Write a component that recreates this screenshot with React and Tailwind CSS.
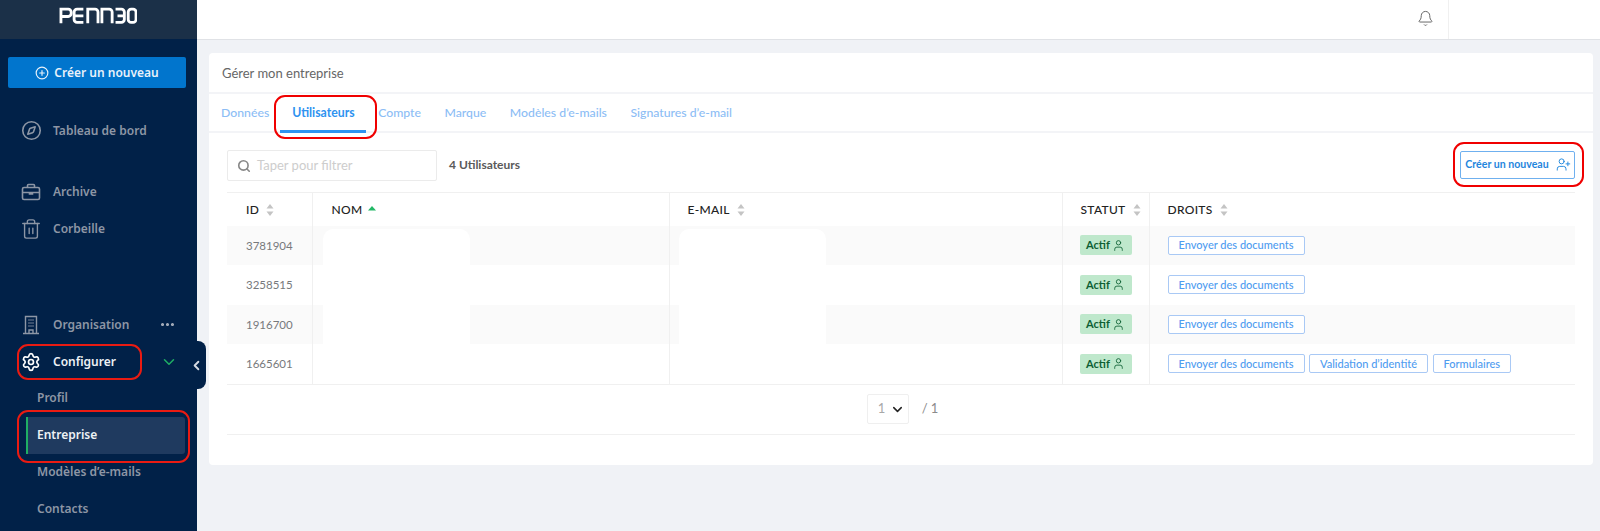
import React from "react";
import { Compass, Trash2, Settings, ChevronDown, ChevronLeft, MoreHorizontal, CirclePlus, Search, Bell, UserPlus, User } from "lucide-react";

function Logo() {
  return (
    <svg width="78" height="17" viewBox="0 0 80 17" fill="none" stroke="white" strokeWidth="2.9" className="block">
      <path d="M2 16.500V2h7.500a3 3 0 0 1 3 3v1.500a3 3 0 0 1-3 3H2" />
      <path d="M25 2h-6.500a3 3 0 0 0-3 3v7.500a3 3 0 0 0 3 3H25M15.500 8.800H25" />
      <path d="M29.500 16.500V2h7.500a3 3 0 0 1 3 3v11.500" />
      <path d="M44 16.500V2h7.500a3 3 0 0 1 3 3v11.500" />
      <path d="M58 2h6a3 3 0 0 1 3 3v7.500a3 3 0 0 1-3 3h-6M60 8.800h7" />
      <rect x="71" y="2" width="8" height="13.500" rx="3" />
    </svg>
  );
}

function Briefcase({ className }) {
  return (
    <svg viewBox="0 0 20 20" fill="none" stroke="currentColor" strokeWidth="1.6" className={className}>
      <rect x="1.500" y="5.500" width="17" height="12" rx="1.500" />
      <path d="M6.500 5.500V3.500a1 1 0 0 1 1-1h5a1 1 0 0 1 1 1v2M1.500 10.500h17M8.500 10.500v1.500h3v-1.500" />
    </svg>
  );
}

function Office({ className }) {
  return (
    <svg viewBox="0 0 20 20" fill="none" stroke="currentColor" strokeWidth="1.4" className={className}>
      <path d="M4.500 18.500V1.500h11v17M2 18.500h16M8 18.500v-3.500h4v3.500" />
      <path d="M8 5h.01M12 5h.01M8 8h.01M12 8h.01M8 11h.01M12 11h.01M10 5h.01M10 8h.01M10 11h.01" strokeWidth="1.500" strokeLinecap="round" />
    </svg>
  );
}

function SortIcon({ active }) {
  if (active) {
    return (
      <svg width="8" height="5" viewBox="0 0 8 5" className="mb-[4px] ml-[6px]">
        <path d="M4 0l4 4.500H0z" fill="#22b866" />
      </svg>
    );
  }
  return (
    <svg width="8" height="12" viewBox="0 0 8 12" className="ml-[7px]">
      <path d="M4 0l3.500 4.500h-7zM4 12L.5 7.500h7z" fill="#c4c4c4" />
    </svg>
  );
}

const navItem = "flex items-center h-[37px] pl-[21px] text-[12px] font-semibold text-[#8d96a5]";
const subItem = "flex h-[36.750px] items-center pl-[37px] text-[12px] font-semibold text-[#8d96a5]";

function Sidebar() {
  return (
    <aside className="relative w-[197px] shrink-0 bg-[#012148] font-['Noto_Sans',sans-serif]">
      <div className="flex h-[39px] items-start justify-center bg-[#1b3048] pt-[7px] pr-[1px]">
        <Logo />
      </div>
      <div className="mx-[8px] mt-[18px] flex h-[31px] w-[178px] items-center justify-center gap-[5px] rounded-[2px] bg-[#0175cd] text-[12px] font-semibold text-[#e8f1fa]">
        <CirclePlus size={14} strokeWidth={2} />
        <span>Créer un nouveau</span>
      </div>
      <div className="mt-[24px]">
        <div className={navItem}>
          <Compass size={21} strokeWidth={1.8} className="mr-[11px]" />
          Tableau de bord
        </div>
      </div>
      <div className="mt-[24px]">
        <div className={navItem}>
          <Briefcase className="mr-[12px] h-[20px] w-[20px]" />
          Archive
        </div>
        <div className={navItem}>
          <Trash2 size={22} strokeWidth={1.5} className="mr-[11px] ml-[-1px]" />
          Corbeille
        </div>
      </div>
      <div className="mt-[59px]">
        <div className={navItem}>
          <Office className="mr-[12px] h-[20px] w-[20px]" />
          <span className="flex-1">Organisation</span>
          <MoreHorizontal size={17} strokeWidth={2.4} className="mr-[21px] text-[#aab2be]" />
        </div>
        <div className={`${navItem} relative h-[36px] text-white`}>
          <Settings size={20} strokeWidth={2} className="mr-[12px] text-white" />
          <span className="flex-1 text-[#eef1f5]">Configurer</span>
          <ChevronDown size={18} strokeWidth={2} className="mr-[19px] text-[#1fae64]" />
          <div className="absolute left-[17px] top-[1px] h-[36px] w-[125px] rounded-[11px] border-2 border-[#ea1b12]" />
        </div>
        <div className={subItem}>Profil</div>
        <div className="relative">
          <div className="ml-[26px] flex h-[37px] w-[159px] items-center rounded-r-[3px] border-l-2 border-[#1fae64] bg-[#1f3a5f] pl-[9px] text-[12px] font-semibold text-[#eef1f5]">
            Entreprise
          </div>
          <div className="absolute left-[17px] top-[-7px] h-[53px] w-[173px] rounded-[11px] border-2 border-[#ea1b12]" />
        </div>
        <div className={subItem}>Modèles d’e-mails</div>
        <div className={subItem}>Contacts</div>
      </div>
      <div className="absolute left-[186px] top-[341px] flex h-[48px] w-[20px] items-center justify-center rounded-r-[8px] bg-[#012148]">
        <ChevronLeft size={15} strokeWidth={3} className="ml-[1px] text-[#d5dae2]" />
      </div>
    </aside>
  );
}

function Tag({ children }) {
  return (
    <span className="flex h-[19px] items-center rounded-[2px] border border-[#a9c9f5] bg-white px-[10px] text-[11px] font-medium text-[#4f9cf0]">
      {children}
    </span>
  );
}

const rows = [
  { id: "3781904", rights: ["Envoyer des documents"] },
  { id: "3258515", rights: ["Envoyer des documents"] },
  { id: "1916700", rights: ["Envoyer des documents"] },
  { id: "1665601", rights: ["Envoyer des documents", "Validation d’identité", "Formulaires"] },
];

function Table() {
  const th = "h-[33px] border-r border-[#f0f0f0] pt-[2px] text-left align-middle text-[12px] font-medium tracking-[0.3px] text-[#222]";
  const td = "h-[39.500px] border-r border-[#f0f0f0] align-middle";
  return (
    <div className="relative mx-[18px] font-['Lato',sans-serif]">
      <table className="w-[1348px] table-fixed border-collapse">
        <colgroup>
          <col className="w-[85px]" />
          <col className="w-[357px]" />
          <col className="w-[393px]" />
          <col className="w-[87px]" />
          <col />
        </colgroup>
        <thead>
          <tr className="border-t border-[#f0f0f0]">
            <th className={`${th} pl-[19px]`}><span className="flex items-center">ID<SortIcon /></span></th>
            <th className={`${th} pl-[19px]`}><span className="flex items-center">NOM<SortIcon active /></span></th>
            <th className={`${th} pl-[18px]`}><span className="flex items-center">E-MAIL<SortIcon /></span></th>
            <th className={`${th} pl-[18px]`}><span className="flex items-center">STATUT<SortIcon /></span></th>
            <th className={`${th} border-r-0 pl-[18px]`}><span className="flex items-center">DROITS<SortIcon /></span></th>
          </tr>
        </thead>
        <tbody>
          {rows.map((r, i) => (
            <tr key={r.id} className={i % 2 === 0 ? "bg-[#fafafa]" : "bg-white"}>
              <td className={`${td} pl-[19px] text-[11.500px] text-[#77797c]`}>{r.id}</td>
              <td className={td}></td>
              <td className={td}></td>
              <td className={`${td} pl-[17px]`}>
                <span className="flex h-[20px] w-[52px] items-center justify-center gap-[2px] rounded-[2px] bg-[#bfe8cc] text-[11px] font-bold text-[#0d5f33]">
                  Actif
                  <User size={13} strokeWidth={1.6} />
                </span>
              </td>
              <td className={`${td} border-r-0 pl-[18px]`}>
                <div className="flex gap-[4.500px]">
                  {r.rights.map((t) => (
                    <Tag key={t}>{t}</Tag>
                  ))}
                </div>
              </td>
            </tr>
          ))}
        </tbody>
      </table>
      <div className="flex h-[51px] items-center justify-center border-y border-[#f0f0f0] pl-[3px]">
        <div className="flex h-[30px] w-[42px] items-center justify-between rounded-[2px] border border-[#efefef] pl-[10px] pr-[3px] text-[13px] text-[#a8a8a8]">
          1
          <ChevronDown size={15} strokeWidth={2.4} className="text-[#222]" />
        </div>
        <span className="ml-[13px] text-[13px] text-[#8b8b8b]">/ 1</span>
      </div>
      <div className="pointer-events-none absolute left-[96px] top-[37px] h-[115px] w-[147px] rounded-t-[10px] bg-white" />
      <div className="pointer-events-none absolute left-[452px] top-[37px] h-[115px] w-[147px] rounded-t-[10px] bg-white" />
    </div>
  );
}

function Card() {
  const tab = "text-[12.250px] font-medium text-[#8cbdf5]";
  return (
    <div className="h-[412px] w-[1384px] rounded-[4px] bg-white font-['Lato',sans-serif]">
      <div className="flex h-[41px] items-center border-b-2 border-[#f3f4f7] pl-[13px] pt-[2px] text-[13px] text-[#666]">
        Gérer mon entreprise
      </div>
      <div className="relative flex h-[39px] items-center border-b-2 border-[#f3f4f7] pl-[12px] pt-[2px]">
        <span className={tab}>Données</span>
        <span className="relative ml-[23px] text-[12.250px] font-bold text-[#2f93f0]">
          Utilisateurs
          <span className="absolute left-[-12px] top-[26px] h-[3px] w-[86px] bg-[#2f93f0]" />
          <span className="absolute left-[-18px] top-[-9px] h-[44px] w-[103px] rounded-[11px] border-2 border-[#f00000]" />
        </span>
        <span className={`${tab} ml-[23.500px]`}>Compte</span>
        <span className={`${tab} ml-[23.500px]`}>Marque</span>
        <span className={`${tab} ml-[23.500px]`}>Modèles d’e-mails</span>
        <span className={`${tab} ml-[23.500px]`}>Signatures d’e-mail</span>
      </div>
      <div className="flex h-[59px] items-start px-[18px] pt-[17px]">
        <div className="flex h-[31px] w-[210px] items-center rounded-[2px] border border-[#ebebeb] pl-[9px] text-[13px] text-[#cdcdcd]">
          <Search size={14} strokeWidth={2.8} className="mr-[6px] text-[#888]" />
          Taper pour filtrer
        </div>
        <span className="ml-[12px] mt-[6px] text-[12px] font-bold text-[#5a5a5a]">4 Utilisateurs</span>
        <div className="relative ml-auto mt-[1px] flex h-[28px] w-[115px] items-center justify-center gap-[7px] rounded-[2px] border border-[#6fb0ef] pl-[1px] pb-[1px] text-[10.600px] font-bold text-[#1f86dd]">
          Créer un nouveau
          <UserPlus size={15} strokeWidth={1.5} />
          <span className="absolute left-[-8px] top-[-10px] h-[45px] w-[131px] rounded-[11px] border-2 border-[#f00000]" />
        </div>
      </div>
      <Table />
    </div>
  );
}

export default function App() {
  return (
    <div className="flex h-[531px] w-[1600px] overflow-hidden bg-[#f0f2f6]">
      <Sidebar />
      <main className="flex min-w-0 flex-1 flex-col">
        <header className="flex h-[40px] items-center justify-end border-b border-[#e0e2e6] bg-white">
          <Bell size={17} strokeWidth={1.4} className="mr-[14px] mb-[2px] text-[#666]" />
          <div className="mr-[151px] h-full w-px bg-[#f0f0f0]" />
        </header>
        <div className="pl-[12px] pt-[13px]">
          <Card />
        </div>
      </main>
    </div>
  );
}
